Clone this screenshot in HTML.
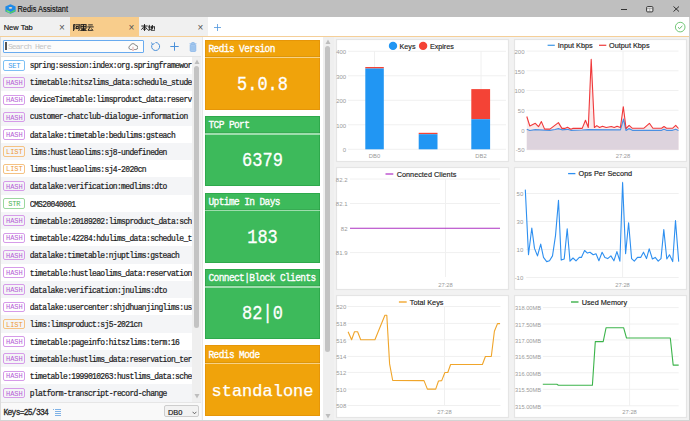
<!DOCTYPE html>
<html><head><meta charset="utf-8">
<style>
*{margin:0;padding:0;box-sizing:border-box}
html,body{width:690px;height:421px;overflow:hidden;background:#fff;font-family:"Liberation Sans",sans-serif}
.abs{position:absolute}
#title{left:0;top:0;width:690px;height:17px;background:#bfbfbf}
#title .t{left:17.5px;top:4.5px;font-size:7.4px;-webkit-text-stroke:0.15px #111;transform:scaleY(1.15);transform-origin:0 50%;color:#111;white-space:nowrap}
#tabs{left:0;top:17px;width:690px;height:19px;background:#fff}
.tab{top:0;height:19px;background:#f0f0f0;font-size:7.5px;color:#111}
.tab .l{left:3.7px;top:6px;white-space:nowrap;-webkit-text-stroke:0.15px #111}
.tab .x{top:5px;font-size:10px;color:#555}
#oline{left:0;top:36px;width:690px;height:1px;background:#f5cf98}
#left{left:0;top:37px;width:203px;height:384px;background:#f5f5f5;border-right:1px solid #e6e6e6}
.mono{font-family:"Liberation Mono",monospace}
.row{left:1px;width:191px;height:17.25px}
.row.g{background:#f4f5f7}
.row.w{background:#fff}
.badge{left:2.3px;top:3.6px;width:22px;height:10.5px;border:1.1px solid;border-radius:2px;font-size:7px;line-height:9.6px;text-align:center;font-family:"Liberation Mono",monospace;letter-spacing:-0.1px}
.b-set{color:#3d9bea;border-color:#7dc0f4}
.b-hash{color:#b65ed6;border-color:#d69be9}
.b-list{color:#ee9a35;border-color:#f5c283}
.b-str{color:#4cb356;border-color:#9bd79f}
.key{left:28.8px;top:4px;font-size:8px;letter-spacing:-0.65px;color:#222;-webkit-text-stroke:0.2px #222;transform:scaleY(1.2);transform-origin:0 50%;white-space:nowrap;overflow:hidden;width:162px}
.card{left:205px;width:115px;color:#fff}
.card .h{left:2.5px;top:2.4px;width:113px;height:12px;font-family:"Liberation Mono",monospace;font-size:9.5px;white-space:nowrap;letter-spacing:-0.6px;-webkit-text-stroke:0.3px #fff;transform:scaleY(1.12);transform-origin:0 0}
.card .sep{left:-1px;top:16.4px;width:115px;height:1.2px;background:rgba(255,255,255,0.5)}
.card .sepd{left:-1px;top:15.3px;width:115px;height:1px;background:rgba(0,0,0,0.08)}
.card .v{left:0;top:19px;width:113px;height:50px;text-align:center;font-family:"Liberation Mono",monospace;font-size:17px;line-height:50px;transform:scaleY(1.18);-webkit-text-stroke:0.25px #fff}
.or{background:#f0a30b;border:1px solid #e69608}
.gr{background:#3dba5b;border:1px solid #2ea94c}
.panel{background:#fff;border:1px solid #dedede}
</style></head><body>
<div id="title" class="abs">
  <svg class="abs" style="left:4.5px;top:3.5px" width="11" height="10" viewBox="0 0 11 10">
    <path d="M5.5 0.3 L10.6 2.6 L10.6 7.4 L5.5 9.7 L0.4 7.4 L0.4 2.6 Z" fill="#1f8ae8"/>
    <path d="M0.8 5.6 L5.5 8 L10.2 5.6 L10.2 7.2 L5.5 9.4 L0.8 7.2Z" fill="#55cf5c"/>
    <path d="M2.3 6.2 L4.5 7.2 L4.5 8.8 L2.3 7.8Z" fill="#7ee07a"/>
    <ellipse cx="5.5" cy="3.8" rx="1.8" ry="0.9" fill="#f6d9b8"/>
  </svg>
  <div class="abs t">Redis Assistant</div>
  <div class="abs" style="left:621px;top:8.5px;width:6px;height:1.3px;background:#333"></div>
  <svg class="abs" style="left:646px;top:6px" width="7.5" height="6.5" viewBox="0 0 7.5 6.5"><rect x="0.6" y="0.6" width="6.3" height="5.3" rx="1" fill="#e8e8e8" stroke="#333" stroke-width="1"/><path d="M0.6 2.5 H6.9 M3.75 2.5 V5.9" stroke="#777" stroke-width="0.5"/></svg>
  <svg class="abs" style="left:673px;top:6px" width="6.5" height="6" viewBox="0 0 6.5 6"><path d="M0.5 0.5 L6 5.5 M6 0.5 L0.5 5.5" stroke="#222" stroke-width="0.9"/></svg>
</div>
<div id="tabs" class="abs">
  <div class="abs tab" style="left:0;width:69.5px"><div class="abs l">New Tab</div><div class="abs x" style="left:59px">×</div></div>
  <div class="abs tab" style="left:69.5px;width:69px;background:#f8cd8c"><svg class="abs" style="left:3.3px;top:6.9px" width="21" height="7" viewBox="0 0 21 7" fill="none" stroke="#1a1a1a" stroke-width="0.95"><path d="M0.6 0.5 V7 M0.6 0.6 H2.2 L1.4 2.7 Q2.6 3.8 1.7 5.1 H1.1"/><path d="M2.8 0.8 H7 M6.2 0.8 V6.3 Q6.2 6.9 5.3 6.7"/><rect x="3.3" y="2.4" width="1.9" height="2.2"/><g transform="translate(7,0)"><rect x="0.9" y="0.6" width="5.2" height="3.6"/><path d="M0.9 2.4 H6.1 M3.5 0.6 V6.8 M1.2 5.4 H5.8 M0.3 6.6 H6.7"/></g><g transform="translate(14,0)"><path d="M1.2 0.9 H5.8 M0.3 2.9 H6.7 M3.2 2.9 L1 6.3 H5.6 M4.5 4.5 L6 6.6"/></g></svg><div class="abs x" style="left:59px">×</div></div>
  <div class="abs tab" style="left:138.5px;width:69px"><svg class="abs" style="left:2.9px;top:7.3px" width="14" height="7" viewBox="0 0 14 7" fill="none" stroke="#1a1a1a" stroke-width="0.95"><path d="M0.3 2 H6.7 M3.5 0.1 V6.9 M3.3 2.3 L0.4 5.7 M3.7 2.3 L6.6 5.7 M2 5.1 H5"/><g transform="translate(7,0)"><path d="M0.1 3 H2.5 M1.3 0.9 V5.9 M0.1 6.4 L2.7 5.5 M2.9 3.5 L6.6 2.6 V5 Q6.6 5.6 6 5.4 M4.4 1 V5.4 M3.3 1.9 V6.2 Q3.3 6.8 4 6.8 H6.9"/></g></svg><div class="abs x" style="left:59px">×</div></div>
  <svg class="abs" style="left:213.5px;top:6.5px" width="7" height="7" viewBox="0 0 7 7"><path d="M3.5 0 V7 M0 3.5 H7" stroke="#4f95dd" stroke-width="0.8"/></svg>
  <svg class="abs" style="left:674px;top:4px" width="13" height="13" viewBox="0 0 13 13"><circle cx="6.2" cy="6.1" r="4.8" fill="none" stroke="#62c168" stroke-width="0.9"/><path d="M4 6.3 L5.6 7.6 L8.4 4.9" fill="none" stroke="#4cae52" stroke-width="0.9"/></svg>
</div>
<div id="oline" class="abs"></div>

<div id="left" class="abs">
  <div class="abs" style="left:3px;top:2.8px;width:141px;height:13.3px;border:1.3px solid #69abef;background:#fcfcfc;border-radius:1px"></div>
  <div class="abs mono" style="left:8px;top:4.6px;font-size:8px;color:#c4c4c4;letter-spacing:-0.93px">Search Here</div>
  <div class="abs" style="left:5.3px;top:5.3px;width:1.6px;height:8.2px;background:#555"></div>
  <svg class="abs" style="left:127.5px;top:6px" width="10" height="8" viewBox="0 0 10 8"><path d="M3.8 6.5 H2.6 A2 2 0 0 1 2.3 2.6 A2.8 2.8 0 0 1 7.6 2.4 A2 2 0 0 1 7.8 6.5 H6.2" fill="none" stroke="#6a6a6a" stroke-width="0.8"/><path d="M5 3.8 V7.6 M4 6.6 L5 7.6 L6 6.6" fill="none" stroke="#d98b8b" stroke-width="0.7"/></svg>
  <svg class="abs" style="left:150px;top:4px" width="11" height="11" viewBox="0 0 11 11"><path d="M2.5 3 A4 4 0 1 0 5.5 1.5" fill="none" stroke="#4a90d9" stroke-width="1"/><path d="M1.5 1.5 L2.5 3.5 L4.5 2.5" fill="none" stroke="#4a90d9" stroke-width="1"/></svg>
  <svg class="abs" style="left:170px;top:5.3px" width="9" height="9" viewBox="0 0 9 9"><path d="M4.5 0.3 V8.7 M0.3 4.5 H8.7" stroke="#4a90d9" stroke-width="1"/></svg>
  <svg class="abs" style="left:188.5px;top:4.5px" width="8" height="10" viewBox="0 0 8 10"><path d="M0.5 1.8 H7.5 M2.8 1.8 V0.6 H5.2 V1.8" fill="none" stroke="#7aaee6" stroke-width="0.8"/><rect x="1.2" y="2.6" width="5.6" height="6.8" rx="0.8" fill="#a9cbf0" stroke="#7aaee6" stroke-width="0.7"/><path d="M3 4 V8 M5 4 V8" stroke="#7aaee6" stroke-width="0.5"/></svg>
  <div class="abs" style="left:0;top:18.5px;width:201px;height:1px;background:#e3e3e3"></div>
  <div class="abs" id="rows" style="left:0;top:19.5px;width:201px;height:347px;background:#fff">
<div class="abs row w" style="top:0.00px"><div class="abs badge b-set"><span style="position:relative;top:0.9px">SET</span></div><div class="abs key mono">spring:session:index:org.springframewor</div></div>
<div class="abs row g" style="top:17.25px"><div class="abs badge b-hash"><span style="position:relative;top:0.9px">HASH</span></div><div class="abs key mono">timetable:hitszlims_data:schedule_stude</div></div>
<div class="abs row w" style="top:34.50px"><div class="abs badge b-hash"><span style="position:relative;top:0.9px">HASH</span></div><div class="abs key mono">deviceTimetable:limsproduct_data:reserv</div></div>
<div class="abs row g" style="top:51.75px"><div class="abs badge b-hash"><span style="position:relative;top:0.9px">HASH</span></div><div class="abs key mono">customer-chatclub-dialogue-information</div></div>
<div class="abs row w" style="top:69.00px"><div class="abs badge b-hash"><span style="position:relative;top:0.9px">HASH</span></div><div class="abs key mono">datalake:timetable:bedulims:gsteach</div></div>
<div class="abs row g" style="top:86.25px"><div class="abs badge b-list"><span style="position:relative;top:0.9px">LIST</span></div><div class="abs key mono">lims:hustleaolims:sj8-undefineden</div></div>
<div class="abs row w" style="top:103.50px"><div class="abs badge b-list"><span style="position:relative;top:0.9px">LIST</span></div><div class="abs key mono">lims:hustleaolims:sj4-2020cn</div></div>
<div class="abs row g" style="top:120.75px"><div class="abs badge b-hash"><span style="position:relative;top:0.9px">HASH</span></div><div class="abs key mono">datalake:verification:medlims:dto</div></div>
<div class="abs row w" style="top:138.00px"><div class="abs badge b-str"><span style="position:relative;top:0.9px">STR</span></div><div class="abs key mono">CMS20040001</div></div>
<div class="abs row g" style="top:155.25px"><div class="abs badge b-hash"><span style="position:relative;top:0.9px">HASH</span></div><div class="abs key mono">timetable:20189202:limsproduct_data:sch</div></div>
<div class="abs row w" style="top:172.50px"><div class="abs badge b-hash"><span style="position:relative;top:0.9px">HASH</span></div><div class="abs key mono">timetable:42284:hdulims_data:schedule_t</div></div>
<div class="abs row g" style="top:189.75px"><div class="abs badge b-hash"><span style="position:relative;top:0.9px">HASH</span></div><div class="abs key mono">datalake:timetable:njuptlims:gsteach</div></div>
<div class="abs row w" style="top:207.00px"><div class="abs badge b-hash"><span style="position:relative;top:0.9px">HASH</span></div><div class="abs key mono">timetable:hustleaolims_data:reservation</div></div>
<div class="abs row g" style="top:224.25px"><div class="abs badge b-hash"><span style="position:relative;top:0.9px">HASH</span></div><div class="abs key mono">datalake:verification:jnulims:dto</div></div>
<div class="abs row w" style="top:241.50px"><div class="abs badge b-hash"><span style="position:relative;top:0.9px">HASH</span></div><div class="abs key mono">datalake:usercenter:shjdhuanjinglims:us</div></div>
<div class="abs row g" style="top:258.75px"><div class="abs badge b-list"><span style="position:relative;top:0.9px">LIST</span></div><div class="abs key mono">lims:limsproduct:sj5-2021cn</div></div>
<div class="abs row w" style="top:276.00px"><div class="abs badge b-hash"><span style="position:relative;top:0.9px">HASH</span></div><div class="abs key mono">timetable:pageinfo:hitszlims:term:16</div></div>
<div class="abs row g" style="top:293.25px"><div class="abs badge b-hash"><span style="position:relative;top:0.9px">HASH</span></div><div class="abs key mono">timetable:hustlims_data:reservation_ter</div></div>
<div class="abs row w" style="top:310.50px"><div class="abs badge b-hash"><span style="position:relative;top:0.9px">HASH</span></div><div class="abs key mono">timetable:1999010263:hustlims_data:sche</div></div>
<div class="abs row g" style="top:327.75px"><div class="abs badge b-hash"><span style="position:relative;top:0.9px">HASH</span></div><div class="abs key mono">platform-transcript-record-change</div></div>
  </div>
  <!-- scrollbar -->
  <div class="abs" style="left:192px;top:19.5px;width:9px;height:345.5px;background:#efefef"></div>
  <div class="abs" style="left:194.3px;top:29.2px;width:5.2px;height:261.9px;background:#c3c3c3;border-radius:2.6px"></div>
  <svg class="abs" style="left:194px;top:22px" width="6" height="6" viewBox="0 0 6 6"><path d="M3 0.5 L5.5 5 H0.5Z" fill="#bdbdbd"/></svg>
  <svg class="abs" style="left:194px;top:356px" width="6" height="6" viewBox="0 0 6 6"><path d="M3 5.5 L5.5 1 H0.5Z" fill="#bdbdbd"/></svg>
  <div class="abs" style="left:0;top:366px;width:201px;height:18px;background:#f9f9f9"></div>
  <div class="abs" style="left:0;top:365px;width:201px;height:1px;background:#e6e6e6"></div>
  <div class="abs mono" style="left:3.5px;top:369.5px;font-size:8px;letter-spacing:-0.75px;color:#222;-webkit-text-stroke:0.25px #222;transform:scaleY(1.2);transform-origin:0 50%">Keys=25/334</div>
  <svg class="abs" style="left:53px;top:371px" width="9" height="8" viewBox="0 0 9 8"><path d="M2 1.5 H8 M2 3.5 H8 M2 5.5 H8 M2 7.5 H8" stroke="#7fb2e6" stroke-width="1"/><path d="M0 1.5 H1" stroke="#7fb2e6"/></svg>
  <div class="abs" style="left:164.2px;top:368.3px;width:34.5px;height:12.2px;border:1px solid #cdcdcd;background:#f2f2f2;border-radius:2px"></div>
  <div class="abs" style="left:168px;top:370.8px;font-size:7.4px;color:#222;-webkit-text-stroke:0.2px #222">DB0</div>
  <svg class="abs" style="left:191.5px;top:373.5px" width="5" height="4" viewBox="0 0 5 4"><path d="M0.6 0.8 L2.5 2.8 L4.4 0.8" fill="none" stroke="#444" stroke-width="0.8"/></svg>
</div>

<!-- info cards -->
<div class="abs card or" style="top:39.6px;height:70.3px"><div class="abs h">Redis Version</div><div class="abs sepd"></div><div class="abs sep"></div><div class="abs v">5.0.8</div></div>
<div class="abs card gr" style="top:116.05px;height:70.3px"><div class="abs h">TCP Port</div><div class="abs sepd"></div><div class="abs sep"></div><div class="abs v">6379</div></div>
<div class="abs card gr" style="top:192.5px;height:70.3px"><div class="abs h">Uptime In Days</div><div class="abs sepd"></div><div class="abs sep"></div><div class="abs v">183</div></div>
<div class="abs card gr" style="top:268.95px;height:70.3px"><div class="abs h">Connect|Block Clients</div><div class="abs sepd"></div><div class="abs sep"></div><div class="abs v">82|0</div></div>
<div class="abs card or" style="top:345.4px;height:70.3px"><div class="abs h">Redis Mode</div><div class="abs sepd"></div><div class="abs sep"></div><div class="abs v" style="transform:none;top:20.5px">standalone</div></div>
<!-- scrollbar mid -->
<div class="abs" style="left:323px;top:37px;width:11px;height:383px;background:#efefef"></div>
<div class="abs" style="left:325.3px;top:46px;width:5.2px;height:305.5px;background:#c3c3c3;border-radius:2.6px"></div>
<svg class="abs" style="left:325px;top:39px" width="6" height="6" viewBox="0 0 6 6"><path d="M3 0.5 L5.5 5 H0.5Z" fill="#bdbdbd"/></svg>
<svg class="abs" style="left:325px;top:413px" width="6" height="6" viewBox="0 0 6 6"><path d="M3 5.5 L5.5 1 H0.5Z" fill="#bdbdbd"/></svg>

<svg class="abs" style="left:0;top:0" width="690" height="421" viewBox="0 0 690 421" font-family="Liberation Sans, sans-serif">
<rect x="334" y="37" width="356" height="384" fill="#f2f2f2"/>
<rect x="336.5" y="39.5" width="172" height="122" fill="#fff" stroke="#e5e5e5" stroke-width="1.2"/>
<rect x="514.5" y="39.5" width="172" height="122" fill="#fff" stroke="#e5e5e5" stroke-width="1.2"/>
<rect x="336.5" y="167.5" width="172" height="122" fill="#fff" stroke="#e5e5e5" stroke-width="1.2"/>
<rect x="514.5" y="167.5" width="172" height="122" fill="#fff" stroke="#e5e5e5" stroke-width="1.2"/>
<rect x="336.5" y="295.5" width="172" height="122" fill="#fff" stroke="#e5e5e5" stroke-width="1.2"/>
<rect x="514.5" y="295.5" width="172" height="122" fill="#fff" stroke="#e5e5e5" stroke-width="1.2"/>
<line x1="348" y1="51.3" x2="506" y2="51.3" stroke="#f0f0f0" stroke-width="1"/>
<text x="346.2" y="54.0" font-size="6.0" fill="#9a9a9a" text-anchor="end">400</text>
<line x1="348" y1="75.8" x2="506" y2="75.8" stroke="#f0f0f0" stroke-width="1"/>
<text x="346.2" y="78.5" font-size="6.0" fill="#9a9a9a" text-anchor="end">300</text>
<line x1="348" y1="100.3" x2="506" y2="100.3" stroke="#f0f0f0" stroke-width="1"/>
<text x="346.2" y="103.0" font-size="6.0" fill="#9a9a9a" text-anchor="end">200</text>
<line x1="348" y1="124.8" x2="506" y2="124.8" stroke="#f0f0f0" stroke-width="1"/>
<text x="346.2" y="127.5" font-size="6.0" fill="#9a9a9a" text-anchor="end">100</text>
<line x1="348" y1="149.3" x2="506" y2="149.3" stroke="#f0f0f0" stroke-width="1"/>
<text x="346.2" y="152.0" font-size="6.0" fill="#9a9a9a" text-anchor="end">0</text>
<line x1="374.5" y1="51" x2="374.5" y2="149" stroke="#f0f0f0" stroke-width="1"/>
<line x1="481" y1="51" x2="481" y2="149" stroke="#f0f0f0" stroke-width="1"/>
<rect x="365.3" y="67.0" width="18.5" height="1.5" fill="#f44336"/>
<rect x="365.3" y="68.5" width="18.5" height="80.80000000000001" fill="#2196f3"/>
<rect x="418.7" y="132.8" width="18.80000000000001" height="1.3999999999999773" fill="#f44336"/>
<rect x="418.7" y="134.2" width="18.80000000000001" height="15.100000000000023" fill="#2196f3"/>
<rect x="471.3" y="89.1" width="18.80000000000001" height="30.10000000000001" fill="#f44336"/>
<rect x="471.3" y="119.2" width="18.80000000000001" height="30.10000000000001" fill="#2196f3"/>
<text x="374.5" y="157.9" font-size="5.8" fill="#9a9a9a" text-anchor="middle">DB0</text>
<text x="481" y="157.9" font-size="5.8" fill="#9a9a9a" text-anchor="middle">DB2</text>
<circle cx="393" cy="45.9" r="4.2" fill="#2196f3"/>
<text x="399.5" y="48.6" font-size="7.2" fill="#222" stroke="#222" stroke-width="0.15">Keys</text>
<circle cx="423.1" cy="45.9" r="4.2" fill="#f44336"/>
<text x="429.9" y="48.6" font-size="7.2" fill="#222" stroke="#222" stroke-width="0.15">Expires</text>
<line x1="526.4" y1="51.1" x2="678.5" y2="51.1" stroke="#f0f0f0" stroke-width="1"/>
<text x="524.5" y="53.800000000000004" font-size="6.0" fill="#9a9a9a" text-anchor="end">200</text>
<line x1="526.4" y1="70.8" x2="678.5" y2="70.8" stroke="#f0f0f0" stroke-width="1"/>
<text x="524.5" y="73.5" font-size="6.0" fill="#9a9a9a" text-anchor="end">150</text>
<line x1="526.4" y1="90.5" x2="678.5" y2="90.5" stroke="#f0f0f0" stroke-width="1"/>
<text x="524.5" y="93.2" font-size="6.0" fill="#9a9a9a" text-anchor="end">100</text>
<line x1="526.4" y1="110.3" x2="678.5" y2="110.3" stroke="#f0f0f0" stroke-width="1"/>
<text x="524.5" y="113.0" font-size="6.0" fill="#9a9a9a" text-anchor="end">50</text>
<line x1="526.4" y1="130" x2="678.5" y2="130" stroke="#f0f0f0" stroke-width="1"/>
<text x="524.5" y="132.7" font-size="6.0" fill="#9a9a9a" text-anchor="end">0</text>
<line x1="526.4" y1="149.7" x2="678.5" y2="149.7" stroke="#f0f0f0" stroke-width="1"/>
<text x="524.5" y="152.39999999999998" font-size="6.0" fill="#9a9a9a" text-anchor="end">-50</text>
<line x1="623" y1="51" x2="623" y2="149.7" stroke="#f0f0f0" stroke-width="1"/>
<text x="623" y="158.4" font-size="5.8" fill="#9a9a9a" text-anchor="middle">27:28</text>
<path d="M526.8,116.5 L529.8,126 L535.3,123.3 L538.5,126.7 L541.4,121.6 L544.6,129.1 L549.9,129.1 L558.4,122.6 L561.9,128.4 L564.7,128.4 L567.5,127.3 L570.8,129.3 L572.7,128.4 L582.2,128.4 L585.5,120.2 L588.3,127.5 L591.2,59.4 L594.4,127.5 L596.8,125.6 L599.6,127.5 L602.5,126.2 L606.2,127.5 L611.4,126.5 L614.2,127.5 L617.1,126.2 L620.4,127.5 L623.3,106.7 L626.1,128.5 L629.1,125.3 L632.4,128.3 L643.7,128.3 L649.4,123.3 L652.9,128.3 L661.6,128.3 L664,126.5 L666.5,128.3 L672.5,128.3 L675.7,125.4 L678.5,128.5 L678.5,149.7 L526.8,149.7 Z" fill="#fae9e9"/>
<path d="M526.8,129.2 L529.8,130.5 L535.3,129.6 L544.6,130.2 L549.9,130.3 L555,129.5 L558.4,128.6 L561.9,129.8 L567.5,129.3 L570.8,130.3 L582.2,130 L588,129.7 L620.4,129.8 L623.5,119.2 L626.1,130.5 L629.1,128.6 L632.4,130.3 L661.6,130.3 L664,129.2 L666.5,130.3 L672.5,130.3 L675.7,129.2 L678.5,130.5 L678.5,149.7 L526.8,149.7 Z" fill="#ddd3dd"/>
<polyline points="526.8,129.2 529.8,130.5 535.3,129.6 544.6,130.2 549.9,130.3 555,129.5 558.4,128.6 561.9,129.8 567.5,129.3 570.8,130.3 582.2,130 588,129.7 620.4,129.8 623.5,119.2 626.1,130.5 629.1,128.6 632.4,130.3 661.6,130.3 664,129.2 666.5,130.3 672.5,130.3 675.7,129.2 678.5,130.5" fill="none" stroke="#4a90e2" stroke-width="1.2" stroke-linejoin="round"/>
<polyline points="526.8,116.5 529.8,126 535.3,123.3 538.5,126.7 541.4,121.6 544.6,129.1 549.9,129.1 558.4,122.6 561.9,128.4 564.7,128.4 567.5,127.3 570.8,129.3 572.7,128.4 582.2,128.4 585.5,120.2 588.3,127.5 591.2,59.4 594.4,127.5 596.8,125.6 599.6,127.5 602.5,126.2 606.2,127.5 611.4,126.5 614.2,127.5 617.1,126.2 620.4,127.5 623.3,106.7 626.1,128.5 629.1,125.3 632.4,128.3 643.7,128.3 649.4,123.3 652.9,128.3 661.6,128.3 664,126.5 666.5,128.3 672.5,128.3 675.7,125.4 678.5,128.5" fill="none" stroke="#f0383a" stroke-width="1.1" stroke-linejoin="round"/>
<line x1="547.6" y1="45.3" x2="554.8" y2="45.3" stroke="#4a9fe8" stroke-width="1.3"/>
<text x="557.8" y="48.05" font-size="7.3" fill="#222" stroke="#222" stroke-width="0.15">Input Kbps</text>
<line x1="599" y1="45.3" x2="606.3" y2="45.3" stroke="#f04848" stroke-width="1.3"/>
<text x="609" y="48.05" font-size="7.3" fill="#222" stroke="#222" stroke-width="0.15">Output Kbps</text>
<text x="347.5" y="181.7" font-size="6.0" fill="#9a9a9a" text-anchor="end">82.2</text>
<line x1="350" y1="179" x2="500" y2="179" stroke="#f0f0f0" stroke-width="1"/>
<text x="347.5" y="206.2" font-size="6.0" fill="#9a9a9a" text-anchor="end">82.1</text>
<line x1="350" y1="203.5" x2="500" y2="203.5" stroke="#f0f0f0" stroke-width="1"/>
<text x="347.5" y="230.7" font-size="6.0" fill="#9a9a9a" text-anchor="end">82</text>
<text x="347.5" y="255.29999999999998" font-size="6.0" fill="#9a9a9a" text-anchor="end">81.9</text>
<line x1="350" y1="252.6" x2="500" y2="252.6" stroke="#f0f0f0" stroke-width="1"/>
<line x1="445.5" y1="179" x2="445.5" y2="277" stroke="#f0f0f0" stroke-width="1"/>
<text x="445.5" y="286.79999999999995" font-size="5.8" fill="#9a9a9a" text-anchor="middle">27:28</text>
<line x1="350" y1="228.3" x2="500" y2="228.3" stroke="#ad32c2" stroke-width="1.1"/>
<line x1="385.5" y1="174" x2="393.3" y2="174" stroke="#b53ec9" stroke-width="1.3"/>
<text x="396.7" y="176.75" font-size="7.3" fill="#222" stroke="#222" stroke-width="0.15">Connected Clients</text>
<line x1="526.2" y1="193.5" x2="678.7" y2="193.5" stroke="#f0f0f0" stroke-width="1"/>
<text x="523.3" y="195.8" font-size="6.0" fill="#9a9a9a" text-anchor="end">50</text>
<line x1="526.2" y1="221.5" x2="678.7" y2="221.5" stroke="#f0f0f0" stroke-width="1"/>
<text x="523.3" y="223.8" font-size="6.0" fill="#9a9a9a" text-anchor="end">30</text>
<line x1="526.2" y1="249.5" x2="678.7" y2="249.5" stroke="#f0f0f0" stroke-width="1"/>
<text x="523.3" y="251.8" font-size="6.0" fill="#9a9a9a" text-anchor="end">10</text>
<line x1="526.2" y1="277.5" x2="678.7" y2="277.5" stroke="#f0f0f0" stroke-width="1"/>
<text x="523.3" y="279.8" font-size="6.0" fill="#9a9a9a" text-anchor="end">-10</text>
<line x1="622.6" y1="181" x2="622.6" y2="277.5" stroke="#f0f0f0" stroke-width="1"/>
<text x="622.6" y="286.79999999999995" font-size="5.8" fill="#9a9a9a" text-anchor="middle">27:28</text>
<polyline points="525.3,189.6 528.5,254.8 531.8,228 534.5,248.4 537.5,255.9 540.7,244.1 543.5,257.4 546.7,261.6 549.5,260.8 552.5,255.9 555.5,235.6 558.5,200.3 561.2,260.1 564.2,259 567.2,228.7 570,261.2 573,258 576,260.8 579.3,257.4 581.4,257.4 584.6,250.5 587.4,253.1 590,252.2 593.2,254.8 596,253.7 598.9,260.8 602.1,252.2 604.9,257.4 607.7,258.6 610.9,255.9 613.9,260.8 616.9,251.6 619.9,261.2 622.6,182.6 625.6,253.7 628.6,222.7 631.6,258.6 634.3,261.2 637.5,257.4 640.7,257.4 643.5,252.2 646.5,258.6 649.2,248.8 652.4,259 655.2,257.4 658.2,261.2 661,258.6 663.8,229.6 666.8,259 669.5,254.8 672.7,261.6 675.5,220.6 678.7,261.6" fill="none" stroke="#2d8ff0" stroke-width="1.1" stroke-linejoin="round"/>
<line x1="568.1" y1="173.6" x2="575.4" y2="173.6" stroke="#2d8ff0" stroke-width="1.3"/>
<text x="578.6" y="176.35" font-size="7.3" fill="#222" stroke="#222" stroke-width="0.15">Ops Per Second</text>
<line x1="347.5" y1="306.5" x2="500.5" y2="306.5" stroke="#f0f0f0" stroke-width="1"/>
<text x="346.3" y="309.2" font-size="6.0" fill="#9a9a9a" text-anchor="end">520</text>
<line x1="347.5" y1="323.4" x2="500.5" y2="323.4" stroke="#f0f0f0" stroke-width="1"/>
<text x="346.3" y="326.09999999999997" font-size="6.0" fill="#9a9a9a" text-anchor="end">518</text>
<line x1="347.5" y1="339.8" x2="500.5" y2="339.8" stroke="#f0f0f0" stroke-width="1"/>
<text x="346.3" y="342.5" font-size="6.0" fill="#9a9a9a" text-anchor="end">516</text>
<line x1="347.5" y1="356.4" x2="500.5" y2="356.4" stroke="#f0f0f0" stroke-width="1"/>
<text x="346.3" y="359.09999999999997" font-size="6.0" fill="#9a9a9a" text-anchor="end">514</text>
<line x1="347.5" y1="372.4" x2="500.5" y2="372.4" stroke="#f0f0f0" stroke-width="1"/>
<text x="346.3" y="375.09999999999997" font-size="6.0" fill="#9a9a9a" text-anchor="end">512</text>
<line x1="347.5" y1="389" x2="500.5" y2="389" stroke="#f0f0f0" stroke-width="1"/>
<text x="346.3" y="391.7" font-size="6.0" fill="#9a9a9a" text-anchor="end">510</text>
<line x1="347.5" y1="405.5" x2="500.5" y2="405.5" stroke="#f0f0f0" stroke-width="1"/>
<text x="346.3" y="408.2" font-size="6.0" fill="#9a9a9a" text-anchor="end">508</text>
<line x1="444.5" y1="306" x2="444.5" y2="405.5" stroke="#f0f0f0" stroke-width="1"/>
<text x="444.5" y="414.2" font-size="5.8" fill="#9a9a9a" text-anchor="middle">27:28</text>
<polyline points="348.1,331.8 351.6,339.7 354.5,331.8 357.6,331.8 360.7,339.7 374.9,339.7 384.9,315.2 386.8,315.2 389.6,363.9 392.7,380.5 424,380.6 427.4,389.1 435.7,389.1 438.5,381 441.7,380.6 444.9,372.5 447.8,372.5 450.6,364.5 482.4,364.5 485.4,356.5 491.3,356.5 494.4,331.3 497.5,323.6 500,323.6" fill="none" stroke="#f0a52a" stroke-width="1.1" stroke-linejoin="round"/>
<line x1="398.9" y1="302" x2="406.7" y2="302" stroke="#f0a020" stroke-width="1.3"/>
<text x="409.8" y="304.75" font-size="7.3" fill="#222" stroke="#222" stroke-width="0.15">Total Keys</text>
<line x1="542.8" y1="307.6" x2="678.7" y2="307.6" stroke="#f0f0f0" stroke-width="1"/>
<text x="541" y="310.3" font-size="5.7" fill="#9a9a9a" text-anchor="end">318.00MB</text>
<line x1="542.8" y1="324" x2="678.7" y2="324" stroke="#f0f0f0" stroke-width="1"/>
<text x="541" y="326.7" font-size="5.7" fill="#9a9a9a" text-anchor="end">317.50MB</text>
<line x1="542.8" y1="339.9" x2="678.7" y2="339.9" stroke="#f0f0f0" stroke-width="1"/>
<text x="541" y="342.59999999999997" font-size="5.7" fill="#9a9a9a" text-anchor="end">317.00MB</text>
<line x1="542.8" y1="356.4" x2="678.7" y2="356.4" stroke="#f0f0f0" stroke-width="1"/>
<text x="541" y="359.09999999999997" font-size="5.7" fill="#9a9a9a" text-anchor="end">316.50MB</text>
<line x1="542.8" y1="372.8" x2="678.7" y2="372.8" stroke="#f0f0f0" stroke-width="1"/>
<text x="541" y="375.5" font-size="5.7" fill="#9a9a9a" text-anchor="end">316.00MB</text>
<line x1="542.8" y1="389.3" x2="678.7" y2="389.3" stroke="#f0f0f0" stroke-width="1"/>
<text x="541" y="392.0" font-size="5.7" fill="#9a9a9a" text-anchor="end">315.50MB</text>
<line x1="542.8" y1="405.8" x2="678.7" y2="405.8" stroke="#f0f0f0" stroke-width="1"/>
<text x="541" y="408.5" font-size="5.7" fill="#9a9a9a" text-anchor="end">315.00MB</text>
<line x1="629.6" y1="307" x2="629.6" y2="405.8" stroke="#f0f0f0" stroke-width="1"/>
<text x="629.6" y="414.0" font-size="5.8" fill="#9a9a9a" text-anchor="middle">27:28</text>
<polyline points="542.8,384.2 556.9,384.2 558.4,385.2 592.4,385.2 595.3,341.6 603.2,341.6 606.1,327.7 623.6,327.7 626.5,338 670.3,338 673.2,365.1 678.7,365.1" fill="none" stroke="#3cb44b" stroke-width="1.1" stroke-linejoin="round"/>
<line x1="571" y1="302" x2="578.5" y2="302" stroke="#2eaa3c" stroke-width="1.3"/>
<text x="581.7" y="304.75" font-size="7.3" fill="#222" stroke="#222" stroke-width="0.15">Used Memory</text>
</svg>
<div class="abs" style="left:689px;top:17px;width:1px;height:404px;background:#cdcdcd"></div>
<div class="abs" style="left:0;top:420px;width:690px;height:1px;background:#d4d4d4"></div>
<div class="abs" style="left:0;top:37px;width:1px;height:383px;background:#dcdcdc"></div>

</body></html>
